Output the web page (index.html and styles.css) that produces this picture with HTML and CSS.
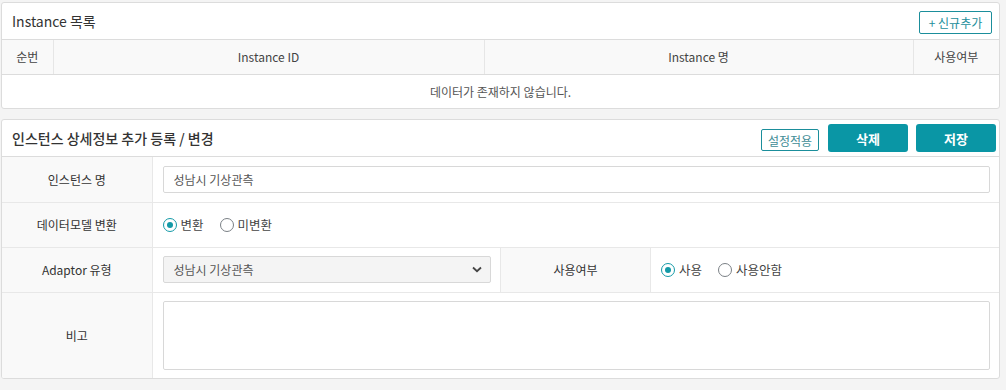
FILE: index.html
```html
<!DOCTYPE html>
<html>
<head>
	<meta charset="utf-8">
	<title>Instance 관리</title>
	<link rel="stylesheet" href="styles.css">
</head>
<body>
	<div class="panel">
		<div class="panel-head">
			<h2 class="title">Instance 목록</h2>
			<button class="btn-line btn-add">+ 신규추가</button>
		</div>
		<table class="list">
			<thead>
				<tr>
					<th class="c-no">순번</th>
					<th class="c-id">Instance ID</th>
					<th class="c-name">Instance 명</th>
					<th class="c-use">사용여부</th>
				</tr>
			</thead>
			<tbody>
				<tr>
					<td colspan="4" class="empty">데이터가 존재하지 않습니다.</td>
				</tr>
			</tbody>
		</table>
	</div>

	<div class="panel panel2">
		<div class="panel-head">
			<h2 class="title bold">인스턴스 상세정보 추가 등록 / 변경</h2>
			<div class="btns">
				<button class="btn-line btn-apply">설정적용</button>
				<button class="btn-fill">삭제</button>
				<button class="btn-fill">저장</button>
			</div>
		</div>
		<table class="form">
			<colgroup>
				<col class="w-label">
				<col>
				<col class="w-label">
				<col>
			</colgroup>
			<tr>
				<th>인스턴스 명</th>
				<td colspan="3"><input type="text" class="ipt" value="성남시 기상관측"></td>
			</tr>
			<tr>
				<th>데이터모델 변환</th>
				<td colspan="3">
					<div class="radios">
						<label class="radio"><span class="dot on"></span>변환</label>
						<label class="radio"><span class="dot"></span>미변환</label>
					</div>
				</td>
			</tr>
			<tr>
				<th>Adaptor 유형</th>
				<td>
					<div class="sel-wrap">
						<select class="sel">
							<option>성남시 기상관측</option>
						</select>
						<svg class="arrow" width="10" height="7" viewBox="0 0 10 7"><path d="M1 1.5 L5 5.2 L9 1.5" fill="none" stroke="#444" stroke-width="1.8"/></svg>
					</div>
				</td>
				<th>사용여부</th>
				<td>
					<div class="radios">
						<label class="radio"><span class="dot on"></span>사용</label>
						<label class="radio"><span class="dot"></span>사용안함</label>
					</div>
				</td>
			</tr>
			<tr class="tall">
				<th>비고</th>
				<td colspan="3"><textarea class="memo"></textarea></td>
			</tr>
		</table>
	</div>
</body>
</html>
```

FILE: styles.css
```css
*{
	margin: 0;
	padding: 0;
	box-sizing: border-box;
}
body{
	background: #f4f4f4;
	font-family: "Noto Sans CJK KR", "Noto Sans", sans-serif;
	font-size: 12px;
	color: #444;
}
.panel{
	margin: 2px 6px 0 1px;
	background: #fff;
	border: 1px solid #dcdcdc;
	border-radius: 3px;
	overflow: hidden;
}
.panel2{
	margin-top: 10px;
}
.panel-head{
	height: 37px;
	border-bottom: 1px solid #dcdcdc;
	display: flex;
	align-items: center;
	justify-content: space-between;
	padding: 0 7px 0 10px;
}
.panel2 .panel-head{
	padding-right: 3px;
}
.title{
	font-size: 14px;
	font-weight: normal;
	color: #333;
}
.title.bold{
	font-weight: 500;
}
.btns{
	display: flex;
	align-items: center;
	gap: 8px;
}
button{
	font-family: inherit;
	cursor: pointer;
}
.btn-line{
	background: #fff;
	border: 1px solid #1b8e9b;
	border-radius: 2px;
	color: #1b8e9b;
	font-size: 12px;
	height: 23px;
}
.btn-add{
	width: 73px;
	margin-top: 3px;
}
.btn-apply{
	width: 58px;
	height: 22px;
	color: #3f8d96;
	margin: 4px 1px 0 0;
}
.btn-fill{
	width: 80px;
	height: 28px;
	border: 0;
	border-radius: 3px;
	background: #0a96a5;
	color: #fff;
	font-size: 13px;
	font-weight: bold;
}
table{
	width: 100%;
	border-collapse: collapse;
	table-layout: fixed;
}
.list th{
	height: 34px;
	background: #f9f9f9;
	border-bottom: 1px solid #dcdcdc;
	border-right: 1px solid #e6e6e6;
	font-weight: normal;
	color: #444;
}
.list th:last-child{
	border-right: 0;
}
.c-no{ width: 51px; }
.c-id{ width: 431px; }
.c-name{ width: 429px; }
.empty{
	height: 34px;
	text-align: center;
	color: #555;
}
.w-label{
	width: 150px;
}
.form th{
	background: #f9f9f9;
	font-weight: normal;
	color: #333;
	border-right: 1px solid #e8e8e8;
	border-bottom: 1px solid #e8e8e8;
	height: 45px;
}
.form td{
	padding: 0 9px 0 10px;
	border-right: 1px solid #e8e8e8;
	border-bottom: 1px solid #e8e8e8;
}
.form td:last-child{
	border-right: 0;
}
.form tr:last-child th,
.form tr:last-child td{
	border-bottom: 0;
}
.form .tall th{
	height: 86px;
}
.ipt{
	width: 100%;
	height: 27px;
	border: 1px solid #d8d8d8;
	border-radius: 2px;
	padding: 0 10px;
	font-family: inherit;
	font-size: 12px;
	color: #555;
	display: block;
}
.sel-wrap{
	position: relative;
}
.sel{
	width: 100%;
	height: 27px;
	border: 1px solid #d8d8d8;
	border-radius: 2px;
	background: #f4f4f4;
	padding: 0 10px;
	font-family: inherit;
	font-size: 12px;
	color: #555;
	-webkit-appearance: none;
	appearance: none;
	display: block;
}
.arrow{
	position: absolute;
	right: 9px;
	top: 10px;
}
.memo{
	width: 100%;
	height: 69px;
	border: 1px solid #d8d8d8;
	border-radius: 2px;
	resize: none;
	display: block;
}
.radios{
	display: flex;
	align-items: center;
	gap: 16px;
}
.radio{
	display: flex;
	align-items: center;
	color: #444;
	font-size: 12.5px;
}
.dot{
	width: 14px;
	height: 14px;
	border: 1.5px solid #7a7f85;
	border-radius: 50%;
	margin-right: 4px;
	display: flex;
	align-items: center;
	justify-content: center;
}
.dot.on{
	border-color: #139aa7;
}
.dot.on::after{
	content: "";
	width: 6px;
	height: 6px;
	border-radius: 50%;
	background: #139aa7;
}
```
